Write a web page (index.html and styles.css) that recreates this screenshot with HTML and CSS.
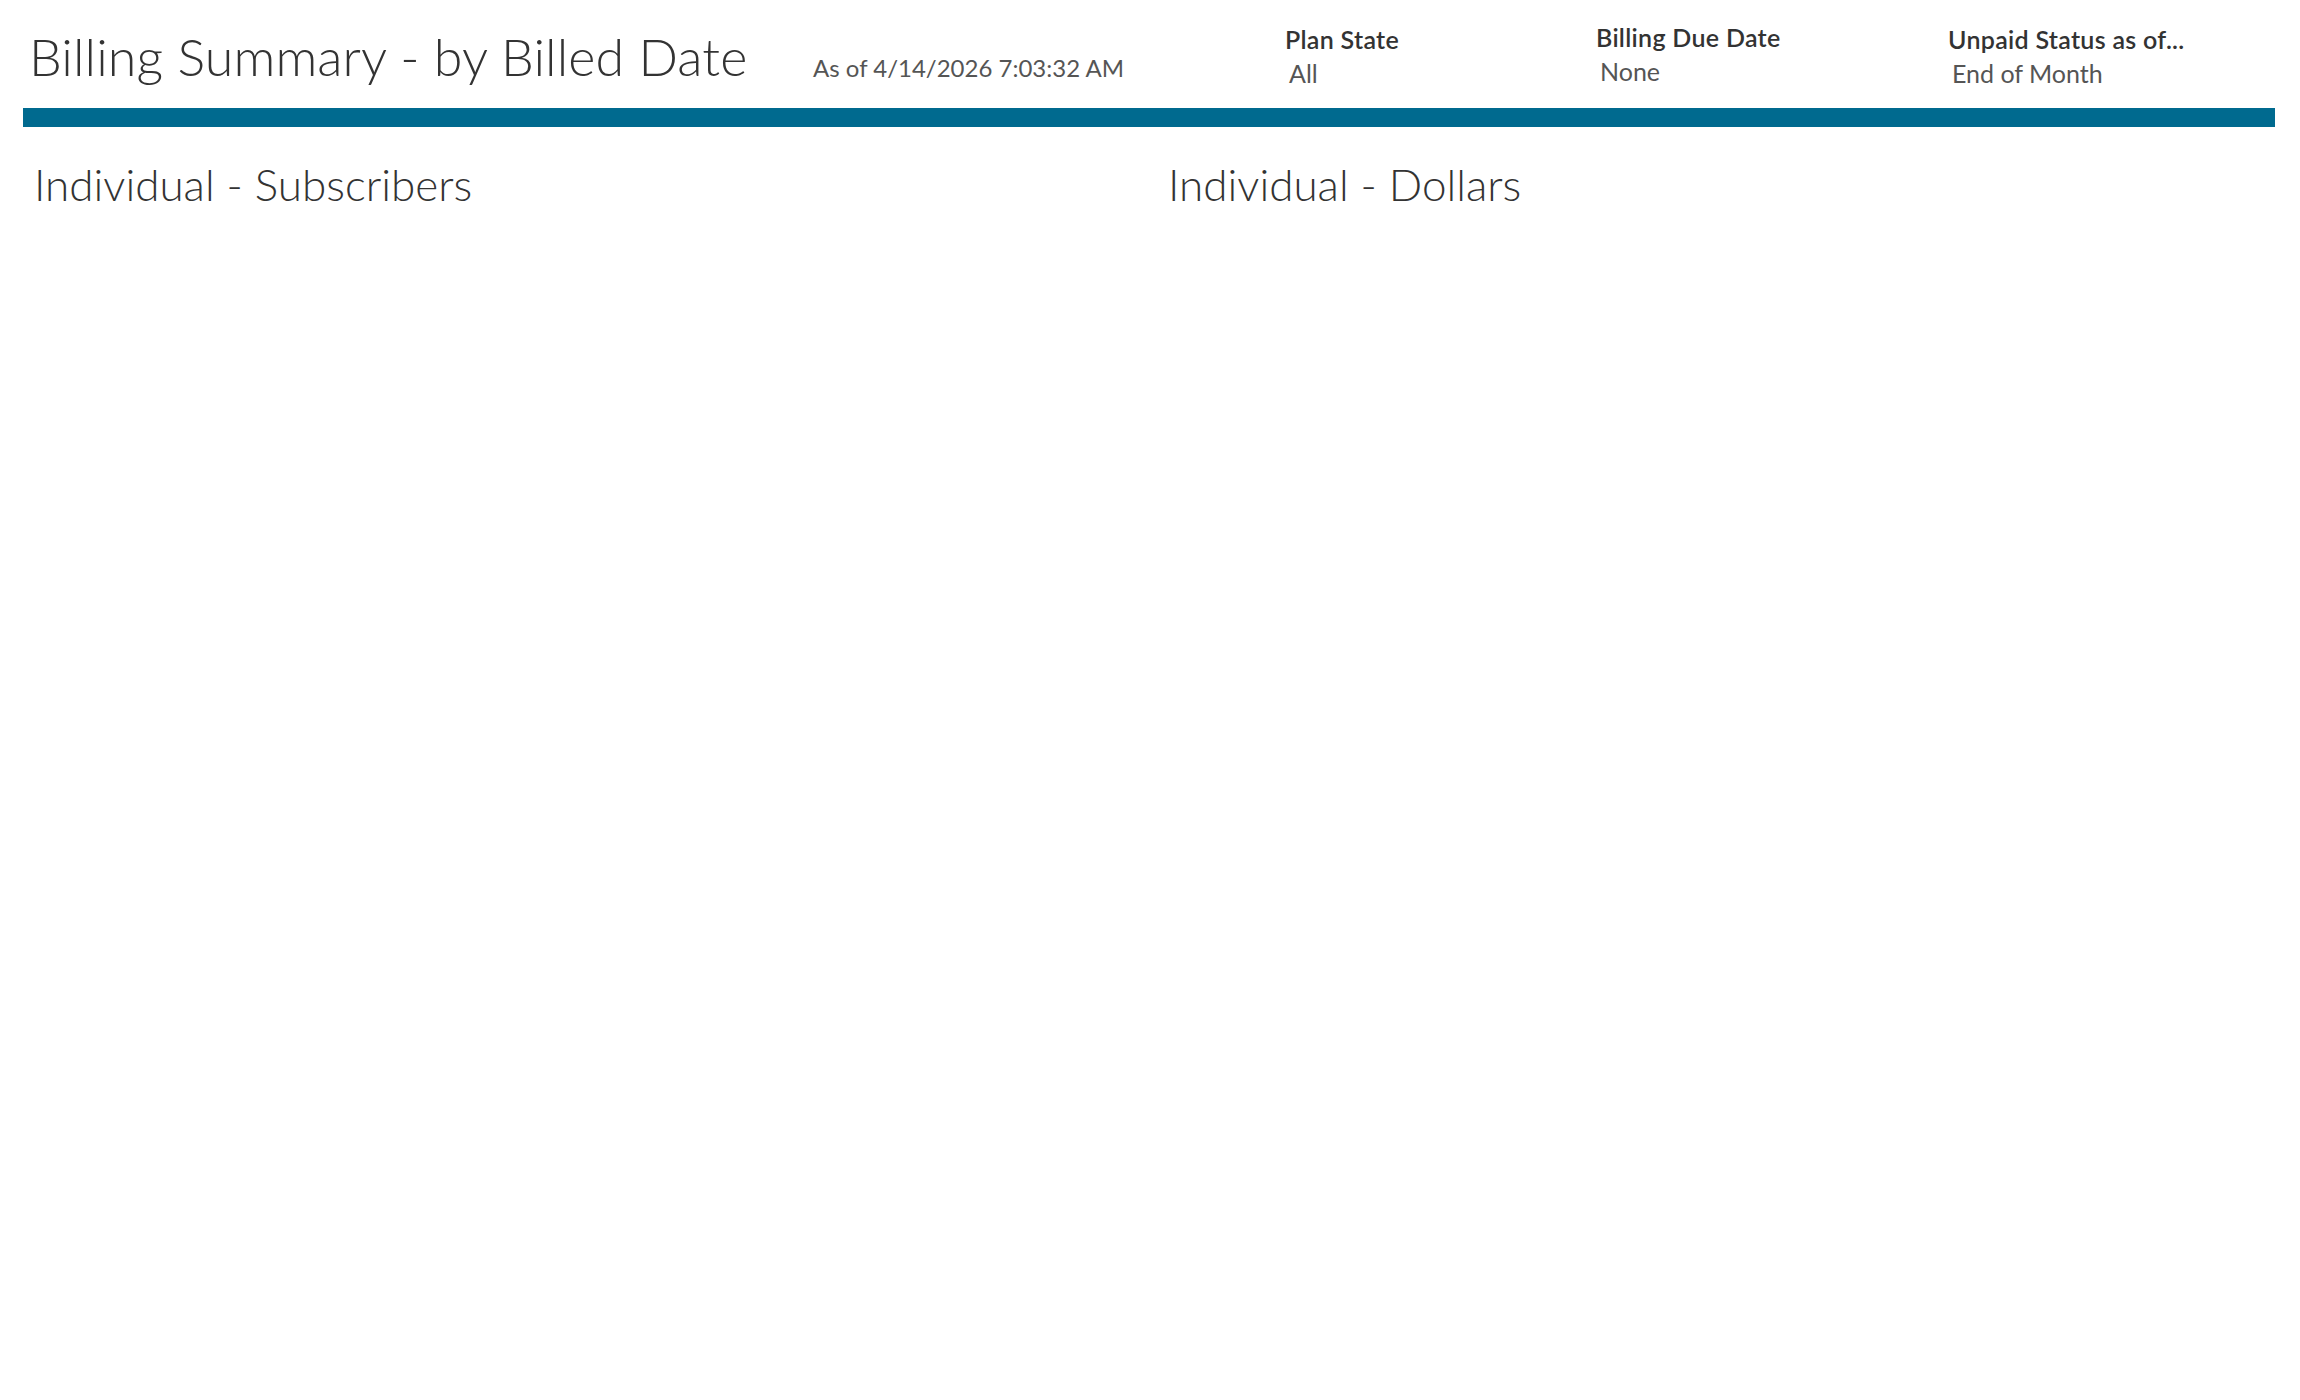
FILE: index.html
```html
<!DOCTYPE html>
<html>
<head>
<title>Billing Summary - by Billed Date</title>
<link rel="stylesheet" href="styles.css">
</head>
<body>
	<div id="page">
		<div class="header">
			<h1 class="title">Billing Summary - by Billed Date</h1>
			<div class="asof">As of 4/14/2026 7:03:32 AM</div>
			<div class="filter filter-plan">
				<div class="filter-label">Plan State</div>
				<div class="filter-value">All</div>
			</div>
			<div class="filter filter-due">
				<div class="filter-label">Billing Due Date</div>
				<div class="filter-value">None</div>
			</div>
			<div class="filter filter-unpaid">
				<div class="filter-label">Unpaid Status as of...</div>
				<div class="filter-value">End of Month</div>
			</div>
		</div>
		<div class="bar"></div>
		<div class="sections">
			<div class="section">
				<h2 class="section-title">Individual - Subscribers</h2>
			</div>
			<div class="section">
				<h2 class="section-title">Individual - Dollars</h2>
			</div>
		</div>
	</div>
</body>
</html>
```

FILE: styles.css
```css
body
{
	margin: 0;
	background-color: #ffffff;
	color: #333333;
	font-family: Lato, "Open Sans", sans-serif;
}

#page
{
	padding: 0 25px 0 23px;
}

.header
{
	display: flex;
	align-items: flex-start;
	height: 108px;
}

.title
{
	margin: 28px 0 0 6px;
	width: 784px;
	font-size: 52px;
	font-weight: 300;
	line-height: 56px;
	letter-spacing: 0.1px;
	color: #333333;
	white-space: nowrap;
}

.asof
{
	margin-top: 54px;
	width: 472px;
	font-size: 24px;
	line-height: 28px;
	color: #555555;
}

.filter
{
	margin-top: 24px;
}

.filter-plan { width: 311px; }
.filter-due { width: 352px; margin-top: 22px; }
.filter-unpaid { flex: 1; }

.filter-label
{
	font-size: 25px;
	font-weight: 600;
	line-height: 30px;
	letter-spacing: 0.3px;
	color: #333333;
}

.filter-value
{
	margin: 5px 0 0 4px;
	font-size: 25px;
	line-height: 28px;
	color: #555555;
}

.bar
{
	height: 19px;
	background-color: #006a8f;
}

.sections
{
	display: grid;
	grid-template-columns: 1134px 1fr;
}

.section
{
	padding-left: 11px;
}

.section-title
{
	margin: 32px 0 0 0;
	font-size: 44px;
	font-weight: 300;
	line-height: 50px;
	color: #333333;
}
```
